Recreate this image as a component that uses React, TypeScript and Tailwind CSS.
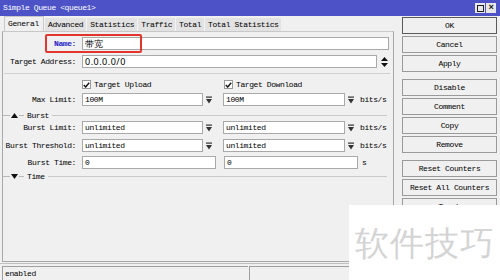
import React from 'react';

const mono = 'font-mono text-[8px] tracking-[-0.4px] text-black';

const DropIcon = () => (
  <svg width="6" height="8" viewBox="0 0 6 8">
    <rect x="0" y="0.5" width="6" height="1.2" fill="#333" />
    <path d="M0 3 H6 L3 7.5 Z" fill="#333" />
  </svg>
);

const Field: React.FC<{ value: string; cls?: string }> = ({ value, cls }) => (
  <div className={`h-[13px] border border-[#a9a9a9] bg-white pl-[2px] leading-[11px] whitespace-nowrap overflow-hidden ${cls ?? ''}`}>
    {value}
  </div>
);

const DropBtn = () => (
  <div className="h-[13px] w-[12px] flex items-center justify-center">
    <DropIcon />
  </div>
);

const Label: React.FC<{ text: string }> = ({ text }) => (
  <div className="w-[74px] shrink-0 text-right pr-[1px] whitespace-nowrap">{text}</div>
);

const PairRow: React.FC<{ label: string; a: string; b: string }> = ({ label, a, b }) => (
  <div className="flex items-center h-[13px]">
    <Label text={label} />
    <div className="ml-[5px] flex items-center">
      <Field value={a} cls="w-[121px]" />
      <DropBtn />
      <div className="w-[8px]" />
      <Field value={b} cls="w-[122px]" />
      <DropBtn />
      <span className="ml-[3px]">bits/s</span>
    </div>
  </div>
);

const Section: React.FC<{ up: boolean; title: string }> = ({ up, title }) => (
  <div className="flex items-center h-[9px]">
    <div className="w-[7px] h-px bg-[#b8b8b8]" />
    <svg width="7" height="5" viewBox="0 0 7 5" className="mx-[1px]">
      {up ? <path d="M0 5 L3.5 0 L7 5 Z" fill="#111" /> : <path d="M0 0 L7 0 L3.5 5 Z" fill="#111" />}
    </svg>
    <div className="w-[5px] h-px bg-[#b8b8b8]" />
    <span className="mx-[3px] leading-[9px]">{title}</span>
    <div className="flex-1 mr-[6px] h-px bg-[#c8c8c8]" />
  </div>
);

const Check: React.FC<{ text: string }> = ({ text }) => (
  <div className="flex items-center">
    <div className="w-[9px] h-[9px] border border-[#9a9a9a] bg-white flex items-center justify-center">
      <svg width="7" height="6" viewBox="0 0 7 6">
        <path d="M0.8 3 L2.7 5 L6.2 0.8" stroke="#111" strokeWidth="1.4" fill="none" />
      </svg>
    </div>
    <span className="ml-[3px]">{text}</span>
  </div>
);

const Btn: React.FC<{ text: string; main?: boolean }> = ({ text, main }) => (
  <div
    className={`h-[17px] w-[95px] flex items-center justify-center bg-[#f0f0f0] border ${
      main ? 'border-[#5a5a5a]' : 'border-[#9a9a9a]'
    }`}
  >
    {text}
  </div>
);

const tabs = ['Advanced', 'Statistics', 'Traffic', 'Total', 'Total Statistics'];

const App: React.FC = () => {
  return (
    <div className={`relative w-[500px] h-[280px] overflow-hidden bg-[#f0f0f0] flex flex-col ${mono}`}>
      {/* title bar */}
      <div className="h-[16px] bg-[#4d53c6] flex items-center px-[3px] text-white shrink-0">
        <span className="flex-1">Simple Queue &lt;queue1&gt;</span>
        <div className="flex gap-[1px] mr-[1px]">
          <div className="w-[10px] h-[10px] bg-[#e8e8e8] flex items-center justify-center">
            <div className="w-[7px] h-[7px] border border-[#222]" />
          </div>
          <div className="w-[10px] h-[10px] bg-[#e8e8e8] flex items-center justify-center text-[#111] text-[9px] leading-[9px] font-bold">
            ×
          </div>
        </div>
      </div>

      <div className="flex flex-1">
        {/* left side */}
        <div className="w-[395px] flex flex-col">
          <div className="flex items-end h-[15px] pl-[4px]">
            <div className="h-[15px] px-[3px] w-[40px] bg-[#f0f0f0] border border-b-0 border-[#c8c8c8] flex items-center">
              General
            </div>
            <div className="flex h-[13px] bg-[#e2e2e2] items-center">
              {tabs.map((t) => (
                <div key={t} className="px-[3px] border-l border-[#f4f4f4] h-full flex items-center">
                  {t}
                </div>
              ))}
            </div>
          </div>

          <div className="relative ml-[2px] mr-[1px] h-[231px] border border-[#a8a8a8] border-t-[#c8c8c8]">
            <div className="flex items-center h-[13px] mt-[5px]">
              <div className="w-[74px] shrink-0 text-right pr-[1px] text-[#2424c8] font-bold">Name:</div>
              <Field value="带宽" cls="ml-[5px] w-[307px] font-sans text-[9px] tracking-normal" />
            </div>
            <div className="flex items-center h-[13px] mt-[5px]">
              <Label text="Target Address:" />
              <Field value="0.0.0.0/0" cls="ml-[5px] w-[295px] font-sans text-[9px] tracking-[0.5px]" />
              <svg width="7" height="10" viewBox="0 0 7 10" className="ml-[4px]">
                <path d="M0 4 L3.5 0 L7 4 Z M0 6 L7 6 L3.5 10 Z" fill="#111" />
              </svg>
            </div>
            <div className="mt-[5px] mx-[1px] w-[386px] h-px bg-[#d0d0d0]" />
            <div className="flex items-center h-[11px] mt-[5px]">
              <div className="ml-[79px] w-[142px]">
                <Check text="Target Upload" />
              </div>
              <Check text="Target Download" />
            </div>
            <div className="mt-[3px]">
              <PairRow label="Max Limit:" a="100M" b="100M" />
            </div>
            <div className="mt-[5px]">
              <Section up title="Burst" />
            </div>
            <div className="mt-[1px]">
              <PairRow label="Burst Limit:" a="unlimited" b="unlimited" />
            </div>
            <div className="mt-[5px]">
              <PairRow label="Burst Threshold:" a="unlimited" b="unlimited" />
            </div>
            <div className="flex items-center h-[13px] mt-[4px]">
              <Label text="Burst Time:" />
              <Field value="0" cls="ml-[5px] w-[134px]" />
              <Field value="0" cls="ml-[8px] w-[134px]" />
              <span className="ml-[4px]">s</span>
            </div>
            <div className="mt-[3px]">
              <Section up={false} title="Time" />
            </div>

            {/* highlight box */}
            <div className="absolute left-[42px] top-[2px] w-[97px] h-[19px] border-2 border-[#e4352c] rounded-[2px]" />
          </div>
        </div>

        {/* right buttons */}
        <div className="ml-[7px] mt-[1px] flex flex-col gap-[2px]">
          <Btn text="OK" main />
          <Btn text="Cancel" />
          <Btn text="Apply" />
          <div className="h-[3px]" />
          <Btn text="Disable" />
          <Btn text="Comment" />
          <Btn text="Copy" />
          <Btn text="Remove" />
          <div className="h-[3px]" />
          <Btn text="Reset Counters" />
          <Btn text="Reset All Counters" />
          <Btn text="Torch" />
        </div>
      </div>

      {/* status bar */}
      <div className="h-[17px] flex items-stretch pt-[2px] shrink-0 border-t border-[#c0c0c0]">
        <div className="ml-[2px] w-[246px] border-t border-l border-[#a0a0a0] pl-[2px] leading-[13px]">enabled</div>
        <div className="ml-[1px] w-[100px] border-t border-l border-[#a0a0a0]" />
      </div>

      {/* watermark */}
      <div className="absolute left-[349px] top-[205px] w-[151px] h-[75px] bg-white flex items-center justify-center">
        <span className="font-sans text-[34px] tracking-[1px] text-[#d4d4d4] font-light">软件技巧</span>
      </div>
    </div>
  );
};

export default App;
